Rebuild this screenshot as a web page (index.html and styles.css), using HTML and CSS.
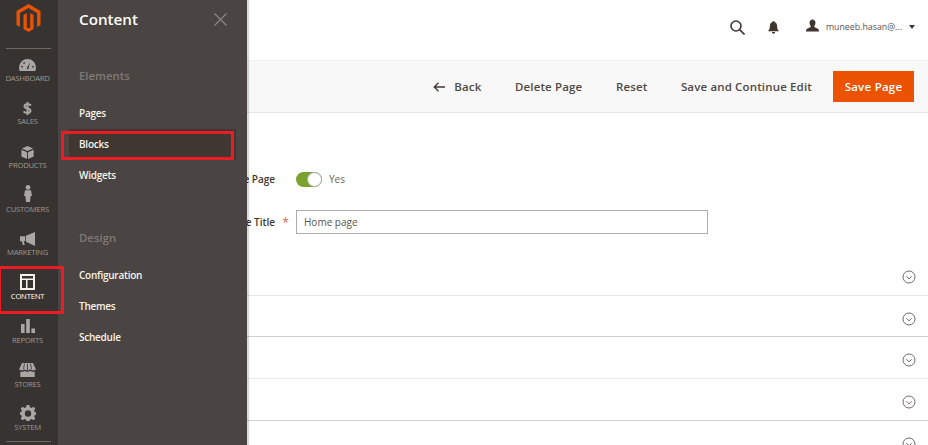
FILE: index.html
```html
<!DOCTYPE html>
<html lang="en">
<head>
<meta charset="utf-8">
<title>Content</title>
<link rel="stylesheet" href="styles.css">
</head>
<body>
<div class="page">
  <nav class="sidebar">
    <div class="logo">
      <svg width="25" height="28" viewBox="0 0 24 28"><path fill="#eb5202" d="M12 0 0 7V21L3.400 23V9L12 4 20.600 9V23L24 21V7Z"/><path fill="#eb5202" d="M13.700 23.500 12 24.500 10.300 23.500V9L7 11V25L12 28 17 25V11L13.700 9Z"/></svg>
    </div>
    <a class="nav-item"><svg class="nav-icon" width="17" height="12" viewBox="0 0 20 14"><path d="M10 0A10 10 0 0 0 0 10c0 1.500.3 2.800.8 4h18.400c.5-1.200.8-2.500.8-4A10 10 0 0 0 10 0Z"/><path class="cut" d="M9 11 12.800 4 11 12Z"/><circle class="cut" cx="3.500" cy="9" r="1"/><circle class="cut" cx="6" cy="4.500" r="1"/><circle class="cut" cx="16.500" cy="9" r="1"/></svg><span>DASHBOARD</span></a>
    <a class="nav-item"><svg class="nav-icon dollar-icon" width="9" height="13" viewBox="0 0 9 13"><path d="M8 3.400C7 2.500 6 2.200 4.500 2.200 2.800 2.200 1.500 3 1.500 4.300c0 3 6 1.500 6 4.500 0 1.300-1.300 2.100-3 2.100-1.500 0-3-.5-4-1.500M4.500 0V13"/></svg><span>SALES</span></a>
    <a class="nav-item"><svg class="nav-icon" width="13" height="13" viewBox="0 0 16 16"><path d="M8 0 15 3 8 6.200 1 3Z"/><path d="M.5 4.500 7.400 7.600V16L.5 12.800Z"/><path d="M15.500 4.500 8.600 7.600V16L15.500 12.800Z"/></svg><span>PRODUCTS</span></a>
    <a class="nav-item"><svg class="nav-icon" width="8" height="17" viewBox="0 0 8 17"><circle cx="4" cy="2.400" r="2.400"/><path d="M1 5.300H7L8 11H6.600L6 17H2L1.400 11H0Z"/></svg><span>CUSTOMERS</span></a>
    <a class="nav-item"><svg class="nav-icon" width="15" height="14" viewBox="0 0 15 14"><path d="M15 0V14L6 9.800V3.800Z"/><path d="M0 4.300H5.200V9.200H3.800L4.800 13H2.800L1.800 9.200H0Z"/></svg><span>MARKETING</span></a>
    <a class="nav-item active"><svg class="nav-icon" width="15" height="16" viewBox="0 0 15 16"><path fill-rule="evenodd" d="M0 0H15V16H0ZM2 2V4.500H13V2ZM2 6V14H6V6ZM7.500 6V14H13V6Z"/></svg><span>CONTENT</span></a>
    <a class="nav-item"><svg class="nav-icon" width="14" height="14" viewBox="0 0 14 14"><path d="M0 5H3.600V14H0ZM5.200 0H8.800V14H5.200ZM10.400 9.500H14V14H10.400Z"/></svg><span>REPORTS</span></a>
    <a class="nav-item"><svg class="nav-icon" width="17" height="14" viewBox="0 0 17 14"><path d="M3 0H14L17 6.500 14.200 7.500 11.300 6.500 8.500 7.500 5.700 6.500 2.800 7.500 0 6.500Z"/><path d="M1.300 8.500 2.800 9 5.700 8 8.500 9 11.300 8 14.200 9 15.700 8.500V14H1.300Z"/><path class="cut-line" d="M5.500 .5 4.500 6M8.500 .5V7M11.500 .5 12.500 6"/></svg><span>STORES</span></a>
    <a class="nav-item"><svg class="nav-icon" width="16" height="16" viewBox="0 0 16 16"><path fill-rule="evenodd" d="M6.600 0H9.400L9.900 2.200 11.500 2.900 13.400 1.700 15.300 3.600 14.100 5.500 14.800 7.100 16 7.300V9.700L14.800 9.900 14.100 11.500 15.300 13.400 13.400 15.300 11.500 14.100 9.900 14.800 9.400 16H6.600L6.100 14.800 4.500 14.100 2.600 15.300 .7 13.400 1.900 11.500 1.200 9.900 0 9.700V7.300L1.200 7.100 1.900 5.500 .7 3.600 2.600 1.700 4.500 2.900 6.100 2.200ZM8 5.300A3.200 3.200 0 1 0 8 11.700 3.200 3.200 0 1 0 8 5.300Z"/></svg><span>SYSTEM</span></a>
    <div class="sidebar-end"></div>
  </nav>

  <main class="main">
    <header class="topbar">
      <svg class="search" width="15" height="15" viewBox="0 0 15 15"><circle cx="6" cy="6" r="5"/><path d="M9.600 9.600 14.500 14.500"/></svg>
      <svg class="bell" width="11" height="13" viewBox="0 0 12 14"><path d="M6 0c.7 0 1 .5 1 1.100C9 1.700 10 3.400 10 6c0 2.500.8 3.800 2 5H0c1.200-1.200 2-2.500 2-5 0-2.600 1-4.300 3-4.900C5 .5 5.300 0 6 0Z"/><path d="M4.300 12h3.400c0 1-.7 1.800-1.700 1.800S4.300 13 4.300 12Z"/></svg>
      <div class="user">
        <svg width="13" height="13" viewBox="0 0 14 13"><path d="M7 0c2 0 3.200 1.500 3.200 3.400S9.200 7 8.800 7.600c0 1 2 1.400 3.500 2.100C13.500 10.200 14 11 14 13H0c0-2 .5-2.800 1.700-3.300C3.200 9 5.200 8.600 5.200 7.600 4.800 7 3.800 5.300 3.800 3.400S5 0 7 0Z"/></svg>
        <span class="user-name">muneeb.hasan@...</span>
        <span class="caret"></span>
      </div>
    </header>

    <div class="actions">
      <a class="action back"><svg width="12" height="10" viewBox="0 0 12 10"><path d="M5.500 .7 1.200 5 5.500 9.300M1.200 5H12"/></svg>Back</a>
      <a class="action">Delete Page</a>
      <a class="action">Reset</a>
      <a class="action last">Save and Continue Edit</a>
      <button class="save" type="button">Save Page</button>
    </div>

    <form class="form">
      <div class="field field-toggle">
        <label class="field-label">Enable Page</label>
        <span class="mark"></span>
        <span class="toggle"><span class="knob"></span></span>
        <span class="toggle-text">Yes</span>
      </div>
      <div class="field field-title">
        <label class="field-label">Page Title</label>
        <span class="mark">*</span>
        <input class="text-input" type="text" value="Home page">
      </div>
    </form>

    <section class="sections">
      <div class="section"><svg class="chev" viewBox="0 0 14 14"><circle cx="7" cy="7" r="6"/><path d="M4.300 6.300 7 8.800 9.700 6.300"/></svg></div>
      <div class="section"><svg class="chev" viewBox="0 0 14 14"><circle cx="7" cy="7" r="6"/><path d="M4.300 6.300 7 8.800 9.700 6.300"/></svg></div>
      <div class="section"><svg class="chev" viewBox="0 0 14 14"><circle cx="7" cy="7" r="6"/><path d="M4.300 6.300 7 8.800 9.700 6.300"/></svg></div>
      <div class="section"><svg class="chev" viewBox="0 0 14 14"><circle cx="7" cy="7" r="6"/><path d="M4.300 6.300 7 8.800 9.700 6.300"/></svg></div>
      <div class="section"><svg class="chev" viewBox="0 0 14 14"><circle cx="7" cy="7" r="6"/><path d="M4.300 6.300 7 8.800 9.700 6.300"/></svg></div>
    </section>
  </main>

  <aside class="flyout">
    <div class="flyout-head">
      <h2>Content</h2>
      <svg class="close" width="13" height="13" viewBox="0 0 13 13"><path d="M.5 .5 12.500 12.500M12.500 .5 .5 12.500"/></svg>
    </div>
    <h3 class="group-title first">Elements</h3>
    <ul class="links">
      <li>Pages</li>
      <li class="current">Blocks</li>
      <li>Widgets</li>
    </ul>
    <h3 class="group-title">Design</h3>
    <ul class="links links-design">
      <li>Configuration</li>
      <li>Themes</li>
      <li>Schedule</li>
    </ul>
  </aside>

  <div class="callout callout-blocks"></div>
  <div class="callout callout-content"></div>
</div>
</body>
</html>
```

FILE: styles.css
```css
* { box-sizing: border-box; }
html, body { margin: 0; height: 100%; overflow: hidden; background: #fff; }
body { font-family: "Open Sans", sans-serif; color: #41362f; }

.page { position: relative; display: flex; height: 445px; overflow: hidden; }

.sidebar { flex: 0 0 58px; background: #373330; height: 445px; display: flex; flex-direction: column; padding-right: 3px; }
.logo { height: 49px; margin: 0 4px 0 6px; padding-top: 4px; border-bottom: 1px solid #6f6a66; display: flex; justify-content: center; }
.nav-item { flex: 0 0 43.7px; display: flex; flex-direction: column; align-items: center; justify-content: flex-end; padding-bottom: 9px; font-size: 7.7px; letter-spacing: -.25px; line-height: 11px; color: #9c9895; }
.nav-item.active { color: #fff; }
.nav-icon { fill: #a9a6a3; margin-bottom: 1.5px; }
.nav-item.active .nav-icon { fill: #f7f3eb; }
.dollar-icon { fill: none; stroke: #a9a6a3; stroke-width: 2; }
.cut { fill: #373330; }
.cut-line { fill: none; stroke: #373330; stroke-width: .8; }
.sidebar-end { margin: -1px 4px 0 6px; border-top: 1px solid #6f6a66; }

.main { flex: 1; min-width: 0; }
.topbar { height: 60px; display: flex; align-items: center; padding: 0 13px 6px 0; justify-content: flex-end; }
.search { fill: none; stroke: #41362f; stroke-width: 1.6; margin-right: 23px; }
.bell { fill: #41362f; margin-right: 27px; }
.user { display: flex; align-items: center; }
.user svg { fill: #41362f; margin-right: 7px; margin-bottom: 3px; }
.user-name { font-size: 8.8px; color: #5c5450; margin-right: 7px; }
.caret { width: 0; height: 0; border-left: 3px solid transparent; border-right: 3px solid transparent; border-top: 4px solid #41362f; }

.actions { height: 53px; background: #f8f8f8; border-top: 1px solid #f1f1f1; border-bottom: 1px solid #e3e3e3; display: flex; align-items: center; justify-content: flex-end; padding-right: 14px; }
.action { font-size: 11.5px; font-weight: 600; letter-spacing: .15px; color: #514943; margin-right: 33.5px; display: flex; align-items: center; }
.action.last { margin-right: 21px; }
.back svg { fill: none; stroke: #41362f; stroke-width: 1.3; margin-right: 9px; }
.save { width: 81px; height: 31px; border: 0; background: #eb5202; color: #fff; font: 600 11.5px "Open Sans", sans-serif; letter-spacing: .25px; padding: 0; }

.form { padding-top: 58px; }
.field { display: flex; align-items: center; }
.field-toggle { height: 16px; }
.field-title { margin-top: 23px; height: 24px; }
.field-label { width: 217px; text-align: right; font-size: 10px; font-weight: 600; color: #41362f; }
.mark { width: 21px; text-align: center; color: #e8604d; font-size: 12px; }
.toggle { position: relative; width: 26px; height: 15px; border-radius: 8px; background: #79a22e; }
.knob { position: absolute; right: 0; top: 0; width: 15px; height: 15px; border-radius: 50%; background: #fff; border: 1px solid #adadad; }
.toggle-text { margin-left: 7px; font-size: 10px; color: #6a6560; }
.text-input { width: 412px; height: 24px; border: 1px solid #adadad; background: #fff; padding: 0 7px; font: 10px "Open Sans", sans-serif; color: #5a524d; }

.sections { margin-top: 20px; }
.section { height: 41.7px; border-bottom: 1px solid #cfcfcf; display: flex; align-items: center; justify-content: flex-end; padding: 5px 12px 0 0; }
.section:nth-child(odd) { border-bottom-color: #e6e6e6; }
.chev { width: 14px; height: 14px; fill: none; stroke: #5f5a57; stroke-width: .9; }

.flyout { position: absolute; left: 58px; top: 0; width: 189px; height: 445px; background: #4a4542; box-shadow: 2px 0 1px rgba(0,0,0,.15); color: #f7f3eb; }
.flyout-head { display: flex; justify-content: space-between; align-items: center; height: 38px; padding: 0 20px 0 21px; }
.flyout-head h2 { margin: 0; font-size: 15.2px; font-weight: 600; color: #fff; }
.close { fill: none; stroke: #8a8683; stroke-width: 1.2; }
.group-title { margin: 38px 0 0 21px; font-size: 11.4px; line-height: 18px; font-weight: 600; color: #7e7a77; }
.group-title.first { margin-top: 29px; }
.links { list-style: none; margin: 12.5px 0 0 0; padding: 0; }
.links-design { margin-top: 13.5px; }
.links li { height: 31px; padding-left: 21px; font-size: 10px; letter-spacing: -.25px; line-height: 31px; font-weight: 600; }
.links li.current { background: #403732; width: 167px; margin-left: 11px; padding-left: 10px; }

.callout { position: absolute; border: 3px solid #ed1c24; }
.callout-blocks { left: 61px; top: 131px; width: 172.5px; height: 28.5px; }
.callout-content { left: -2px; top: 266px; width: 66px; height: 48px; }
```
